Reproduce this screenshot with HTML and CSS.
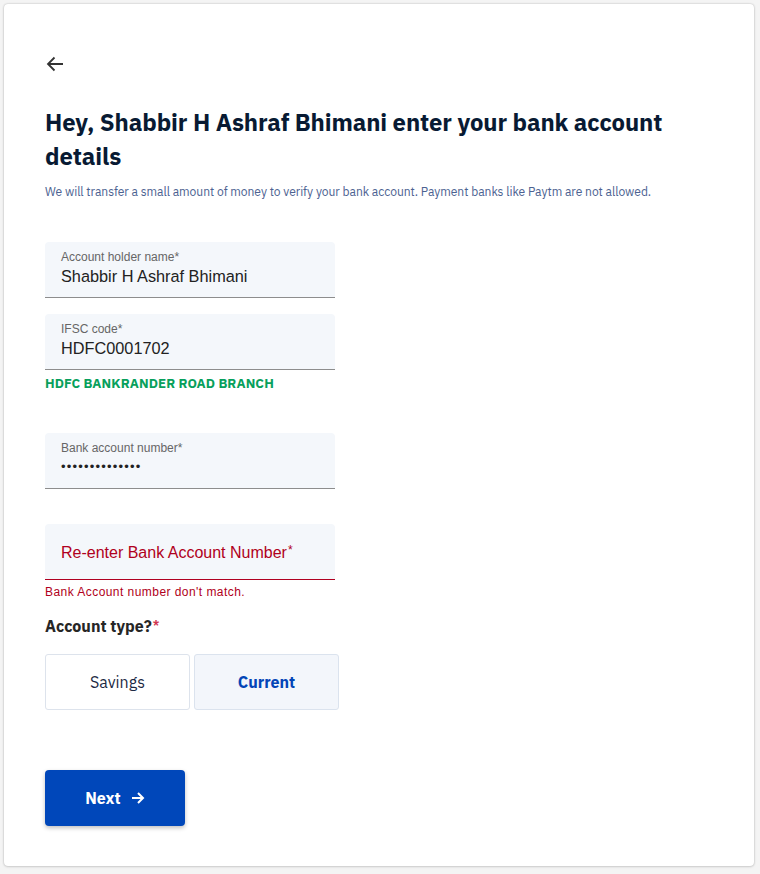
FILE: index.html
```html
<!DOCTYPE html>
<html>
<head>
<meta charset="utf-8">
<link rel="stylesheet" href="styles.css">
</head>
<body>
<div class="card">
  <button class="back" aria-label="Back">
    <svg width="18" height="16" viewBox="0 0 18 16"><path d="M17 8H2M8.5 1.5L2 8l6.5 6.5" fill="none" stroke="#333" stroke-width="1.8"/></svg>
  </button>
  <h1 class="title">Hey, Shabbir H Ashraf Bhimani enter your bank account details</h1>
  <p class="subtitle">We will transfer a small amount of money to verify your bank account. Payment banks like Paytm are not allowed.</p>

  <div class="field">
    <div class="label">Account holder name*</div>
    <div class="value">Shabbir H Ashraf Bhimani</div>
  </div>

  <div class="field field-gap">
    <div class="label">IFSC code*</div>
    <div class="value">HDFC0001702</div>
  </div>
  <div class="bank">HDFC BANKRANDER ROAD BRANCH</div>

  <div class="field field-acc">
    <div class="label">Bank account number*</div>
    <div class="value dots">••••••••••••••</div>
  </div>

  <div class="field field-err">
    <div class="placeholder">Re-enter Bank Account Number<span class="ast">*</span></div>
  </div>
  <div class="error">Bank Account number don't match.</div>

  <div class="type-label">Account type?<span class="req">*</span></div>
  <div class="types">
    <button class="type">Savings</button>
    <button class="type selected">Current</button>
  </div>

  <button class="next">Next
    <svg width="14" height="14" viewBox="0 0 14 14"><path d="M1 7h11M7 2l5 5-5 5" fill="none" stroke="#fff" stroke-width="2"/></svg>
  </button>
</div>
</body>
</html>
```
FILE: styles.css
```css
html, body { margin: 0; padding: 0; background: #f4f4f4; }
body { padding: 4px 6px 8px 4px; font-family: "IBM Plex Sans", "Roboto", "Liberation Sans", sans-serif; }
.card {
  background: #fff;
  border-radius: 4px;
  box-shadow: 0 0 2px rgba(0,0,0,0.25), 0 1px 3px rgba(0,0,0,0.1);
  height: 862px;
  box-sizing: border-box;
  padding: 52px 41px 0;
}
.back { background: none; border: 0; padding: 0; margin: 0 0 0 1px; display: block; height: 16px; cursor: pointer; }
.title {
  margin: 34px 0 0;
  font-size: 23.9px;
  line-height: 34px;
  font-weight: 700;
  color: #081a33;
  max-width: 640px;
  letter-spacing: -0.1px;
}
.subtitle { margin: 10px 0 0; font-size: 12.1px; line-height: 16px; color: #4c6291; letter-spacing: -0.05px; }

.field {
  width: 290px;
  background: #f4f7fb;
  border-radius: 4px 4px 0 0;
  border-bottom: 1px solid #8d8d8d;
  padding: 0 16px;
  margin-top: 42px;
  font-family: "Liberation Sans", Arial, sans-serif;
  box-sizing: border-box;
  height: 56px;
}
.field-gap { margin-top: 16px; }
.field-acc { margin-top: 43px; }
.field-err { margin-top: 35px; border-bottom-color: #b00020; display: flex; align-items: center; }
.label { padding-top: 8px; font-size: 12px; line-height: 14px; color: #666; }
.value { font-size: 16.3px; line-height: 24px; color: #222; margin-top: 0; }
.dots { font-size: 13px; letter-spacing: 1.2px; }
.placeholder { font-size: 16px; color: #b00020; margin-top: 1px; }
.ast { font-size: 12px; vertical-align: 4px; margin-left: 1px; }
.bank { font-size: 13.3px; font-weight: 700; color: #08a05c; margin-top: 6px; line-height: 14px; letter-spacing: 0.1px; }
.error { font-family: "Liberation Sans", Arial, sans-serif; font-size: 12px; color: #b00020; margin-top: 5px; line-height: 14px; letter-spacing: 0.45px; }
.type-label { font-size: 16px; font-weight: 700; color: #262626; margin-top: 14px; line-height: 22px; }
.req { color: #d0364f; font-size: 11px; vertical-align: 4px; margin-left: 1px; }
.types { display: flex; gap: 4px; margin-top: 17px; }
.type {
  width: 145px; height: 56px;
  background: #fff; border: 1px solid #dde3ec; border-radius: 3px;
  font-family: inherit; font-size: 16px; color: #1c2a44; cursor: pointer;
}
.type.selected { background: #f3f6fb; color: #0345b7; font-weight: 700; border-color: #dbe3ee; }
.next {
  margin-top: 60px;
  width: 140px; height: 56px;
  background: #0047ba; color: #fff; border: 0; border-radius: 4px;
  box-shadow: 0 2px 4px rgba(0,0,0,0.25);
  font-family: inherit; font-size: 16px; font-weight: 700;
  display: flex; align-items: center; justify-content: center; gap: 10px;
  cursor: pointer;
}
```
